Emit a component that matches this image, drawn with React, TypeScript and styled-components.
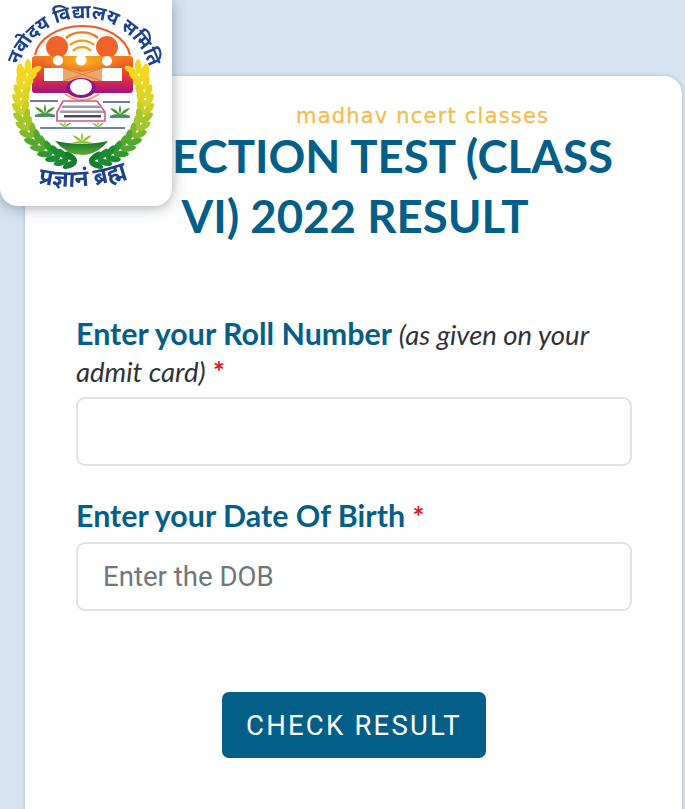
import React from 'react'
import styled, { createGlobalStyle } from 'styled-components'

const GlobalStyle = createGlobalStyle`
	html, body {
		margin: 0;
		padding: 0;
		background: #d5e3f3;
	}
	* {
		box-sizing: border-box;
	}
`

const Page = styled.div`
	position: relative;
	height: 809px;
	overflow: hidden;
	padding: 76px 3px 0 25px;
`

const Card = styled.main`
	height: 760px;
	background: #fff;
	border-radius: 18px;
	box-shadow: 0 0 4px rgba(110, 120, 130, 0.4);
	padding: 30px 50px 0 51px;
	font-family: Lato, sans-serif;
`

const Watermark = styled.div`
	font-family: 'DejaVu Sans', sans-serif;
	font-size: 21px;
	line-height: 20px;
	letter-spacing: 1.2px;
	-webkit-text-stroke: 0.3px #f5bc4c;
	color: #f5bc4c;
	padding-left: 220px;
	white-space: nowrap;
`

const Title = styled.h1`
	margin: 0;
	padding-left: 2px;
	font-size: 45.6px;
	line-height: 60px;
	font-weight: 700;
	text-align: center;
	color: #045f88;
`

const Form = styled.form`
	margin-top: 69px;
	display: flex;
	flex-direction: column;
`

const Field = styled.div`
	margin-bottom: 31px;
`

const Label = styled.label`
	display: block;
	font-size: 30.4px;
	line-height: 37px;
	font-weight: 700;
	color: #045f88;
	margin-bottom: 8px;
`

const Hint = styled.em`
	font-size: 27.5px;
	line-height: 1;
	font-weight: 400;
	color: #2f3337;
`

const Star = styled.span`
	font-size: 28px;
	line-height: 1;
	color: #e3141c;
`

const Input = styled.input`
	display: block;
	width: 100%;
	height: 69px;
	border: 2px solid #dfe1e3;
	border-radius: 9px;
	padding: 0 25px;
	font-family: Roboto, sans-serif;
	font-size: 27.6px;
	color: #333;
	background: #fff;
	&::placeholder {
		color: #6f767c;
		opacity: 1;
	}
`

const Actions = styled.div`
	display: flex;
	justify-content: center;
	margin-top: 50px;
`

const Button = styled.button`
	width: 264px;
	height: 66px;
	border: 0;
	border-radius: 7px;
	background: #045f88;
	color: #fff;
	font-family: Roboto, sans-serif;
	font-size: 27.5px;
	letter-spacing: 2.2px;
`

const LogoTile = styled.div`
	position: absolute;
	left: 0;
	top: 0;
	width: 172px;
	height: 206px;
	background: #fff;
	border-radius: 0 0 18px 18px;
	box-shadow: 0 2px 14px rgba(60, 70, 80, 0.45);
`

const wheatColours = ['#f2d91c', '#ecd820', '#dcd424', '#c8d028', '#a6c52a', '#7fb82c', '#55a82e', '#2f9a2f', '#1c8a30', '#167c2e']

// one side of the wreath, the other side is the same group mirrored
const Wheat = ({ mirrored }: { mirrored?: boolean }) => {
	const grains = Array.from({ length: 15 }, (_, i) => {
		const degrees = -30 + i * 8
		const angle = (degrees * Math.PI) / 180
		return {
			x: 83 - 62 * Math.cos(angle),
			y: 102 + 60 * Math.sin(angle),
			degrees,
			colour: wheatColours[Math.min(9, Math.floor(i * 0.68))],
		}
	})
	return (
		<g transform={mirrored ? 'translate(166 0) scale(-1 1)' : undefined}>
			{grains.map(({ x, y, degrees, colour }) => (
				<g key={degrees} transform={`translate(${x} ${y}) rotate(${-degrees})`}>
					<ellipse cx="-4" cy="-4" rx="3.2" ry="7.5" fill={colour} transform="rotate(-30 -4 -4)" />
					<ellipse cx="4" cy="-4" rx="3.2" ry="7.5" fill={colour} transform="rotate(30 4 -4)" />
				</g>
			))}
			<ellipse cx="20" cy="71" rx="3.5" ry="7.5" fill="#f2d91c" />
		</g>
	)
}

const Sprout = ({ x, y, size = 1, colour = '#3f9a34' }: { x: number; y: number; size?: number; colour?: string }) => (
	<g transform={`translate(${x} ${y}) scale(${size})`} fill={colour}>
		<path d="M0 0 Q-2 -6 0 -10 Q2 -6 0 0Z" />
		<path d="M0 0 Q-7 -2 -10 -7 Q-3 -6 0 0Z" />
		<path d="M0 0 Q7 -2 10 -7 Q3 -6 0 0Z" />
		<path d="M-11 1 Q0 -3 11 1 Q0 2 -11 1Z" />
	</g>
)

const Logo = () => (
	<svg width="172" height="206" viewBox="0 0 172 206">
		<defs>
			<linearGradient id="band" x1="0" y1="0" x2="0" y2="1">
				<stop offset="0" stopColor="#f47a1e" />
				<stop offset="0.5" stopColor="#e8402e" />
				<stop offset="1" stopColor="#a5117f" />
			</linearGradient>
			<radialGradient id="glow" cx="0.5" cy="0.15" r="0.4">
				<stop offset="0" stopColor="#fbb81a" />
				<stop offset="1" stopColor="#fbb81a" stopOpacity="0" />
			</radialGradient>
			<linearGradient id="bowl" x1="0" y1="0" x2="0" y2="1">
				<stop offset="0" stopColor="#156f2c" />
				<stop offset="1" stopColor="#5cb130" />
			</linearGradient>
			<path id="arcTop" d="M19 65 A68 68 0 0 1 148 64" />
			<path id="arcBottom" d="M38 183 Q82 193 128 176" />
			<filter id="soft">
				<feGaussianBlur stdDeviation="0.35" />
			</filter>
		</defs>
		<g filter="url(#soft)">
			<text fontFamily="'Noto Sans', sans-serif" fontSize="19" fontWeight="700" fill="#1e3f92">
				<textPath href="#arcTop">नवोदय विद्यालय समिति</textPath>
			</text>
			<text fontFamily="'Noto Sans', sans-serif" fontSize="23" fontWeight="700" fill="#1e3f92">
				<textPath href="#arcBottom">प्रज्ञानं ब्रह्म</textPath>
			</text>

			<path d="M35 55 A48 34 0 0 1 130 55" fill="none" stroke="#ee5a24" strokeWidth="2" />
			<circle cx="57" cy="47" r="11" fill="#f0642a" />
			<circle cx="107" cy="47" r="11" fill="#f0642a" />
			<g fill="none" stroke="#f59a1f" strokeWidth="2.4">
				<path d="M66 38 A22 18 0 0 1 98 38" stroke="#ee7a24" />
				<path d="M70 45 A16 13 0 0 1 94 45" />
				<path d="M73 51 A11 9 0 0 1 91 51" />
			</g>

			<rect x="32" y="56" width="101" height="37" rx="3" fill="url(#band)" />
			<rect x="32" y="56" width="101" height="37" rx="3" fill="url(#glow)" />
			<circle cx="58" cy="60.500" r="5" fill="#fff" />
			<circle cx="81" cy="60" r="5.500" fill="#fff" />
			<circle cx="107" cy="61" r="5" fill="#fff" />
			<rect x="44" y="68" width="20" height="13" fill="#fff" />
			<rect x="102" y="68" width="20" height="13" fill="#fff" />
			<path d="M63 68 L82 72 L102 68 V81 H63Z" fill="#eda766" />
			<path d="M63 68 L102 81 M102 68 L63 81" stroke="#d8733c" strokeWidth="0.8" />
			<ellipse cx="81" cy="88" rx="15" ry="10" fill="#8a1587" />
			<ellipse cx="81" cy="87" rx="11" ry="8" fill="#fff" />
			<path d="M65 94 Q82 106 99 94" fill="none" stroke="#e8a35f" strokeWidth="2" />

			<path d="M63 101 H97 L105 112 V121 H57 V112Z" fill="#fff" stroke="#d4528e" strokeWidth="1.600" />
			<rect x="62" y="105.500" width="40" height="2.500" fill="#9c9ca4" />
			<rect x="60" y="110.500" width="44" height="2.500" fill="#9c9ca4" />
			<rect x="64" y="115" width="37" height="2.500" fill="#4b4b55" />

			<g stroke="#3e5c90" strokeWidth="1.600">
				<path d="M30 101 H58" />
				<path d="M103 102 H130" />
				<path d="M35 116 H55" />
				<path d="M110 117 H130" />
				<path d="M40 128 H125" />
			</g>
			<Sprout x={45} y={114} />
			<Sprout x={120} y={115} />
			<Sprout x={65} y={127} size={0.6} colour="#79b232" />
			<Sprout x={98} y={127} size={0.6} colour="#79b232" />
			<Sprout x={82} y={142} size={0.95} colour="#93c02c" />
			<path d="M55 141 Q82 147 108 141 Q97 155 82 155 Q67 155 55 141Z" fill="url(#bowl)" />

			<Wheat />
			<Wheat mirrored />
		</g>
	</svg>
)

export default function App() {
	return (
		<Page>
			<GlobalStyle />
			<Card>
				<Watermark>madhav ncert classes</Watermark>
				<Title>SELECTION TEST (CLASS VI) 2022 RESULT</Title>
				<Form>
					<Field>
						<Label>
							Enter your Roll Number <Hint>(as given on your admit card)</Hint>{' '}
							<Star>*</Star>
						</Label>
						<Input />
					</Field>
					<Field>
						<Label>
							Enter your Date Of Birth <Star>*</Star>
						</Label>
						<Input placeholder="Enter the DOB" />
					</Field>
					<Actions>
						<Button type="button">CHECK RESULT</Button>
					</Actions>
				</Form>
			</Card>
			<LogoTile>
				<Logo />
			</LogoTile>
		</Page>
	)
}
